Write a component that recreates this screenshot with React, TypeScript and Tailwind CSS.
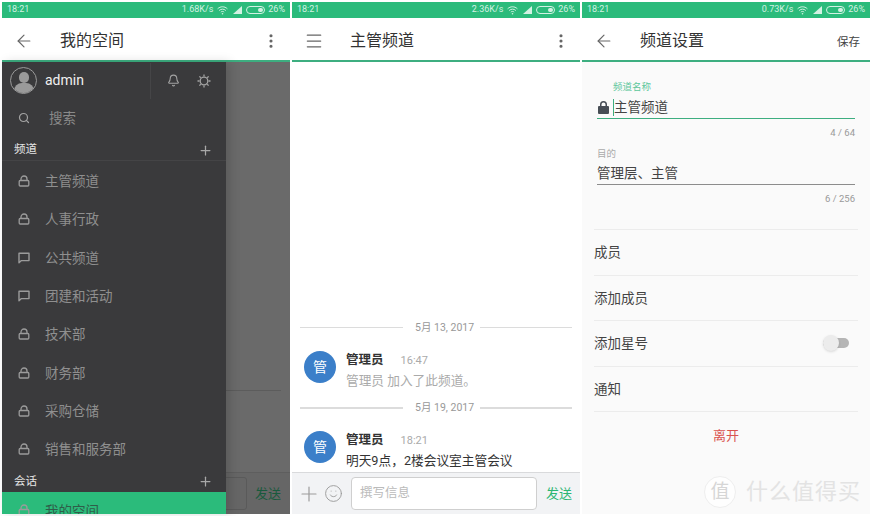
import { ArrowLeft, Bell, EllipsisVertical, Menu, Plus, Search, Smile } from 'lucide-react'

const font = 'font-["Roboto","Noto_Sans_CJK_SC",sans-serif]'

function StatusBar({ speed }: { speed: string }) {
  return (
    <div className="h-4 shrink-0 bg-[#2bbb7b] flex items-center pl-[5px] pr-[5px] text-[9px] text-[#d3f1e3]">
      <span>18:21</span>
      <span className="ml-auto">{speed}</span>
      <svg width="11" height="9" viewBox="0 0 11 9" className="ml-[4px]" fill="none" stroke="#d3f1e3" strokeWidth="1">
        <path d="M.6 2.8C3.5.1 7.5.1 10.4 2.8M2.2 4.5c2-1.800 4.600-1.800 6.600 0M3.800 6.100c1-.9 2.400-.9 3.400 0" />
        <circle cx="5.500" cy="7.700" r=".8" fill="#d3f1e3" stroke="none" />
      </svg>
      <svg width="10" height="8" viewBox="0 0 10 8" className="ml-[5px]" fill="#d3f1e3">
        <path d="M9 0v8H0Z" />
      </svg>
      <div className="ml-[3px] w-[19px] h-[8px] rounded-full border border-[#d3f1e3] flex justify-end p-[1px]">
        <div className="w-[5px] rounded-full bg-[#d3f1e3]" />
      </div>
      <span className="ml-[3px]">26%</span>
    </div>
  )
}

function Header({ icon, title, action }: { icon: React.ReactNode; title: string; action: React.ReactNode }) {
  return (
    <div className="h-[44px] shrink-0 bg-white border-b-2 border-[#3dae80] flex items-center pt-[3px] pl-[12px] pr-[10px]">
      <div className="w-[20px] flex justify-center text-[#666]">{icon}</div>
      <span className="ml-[26px] text-[16px] text-[#333]">{title}</span>
      <div className="ml-auto">{action}</div>
    </div>
  )
}

function Dots() {
  return <EllipsisVertical size={18} strokeWidth={2.2} className="text-[#666]" />
}

function LockIcon() {
  return (
    <svg width="12" height="12" viewBox="0 0 12 12" fill="none" stroke="#9b9b9b" strokeWidth="1.300">
      <rect x="1.200" y="5.500" width="9.600" height="5.500" rx="1" />
      <path d="M3 5.500V4a3 3 0 0 1 6 0v1.500" />
    </svg>
  )
}

function BubbleIcon() {
  return (
    <svg width="12" height="12" viewBox="0 0 12 12" fill="none" stroke="#9b9b9b" strokeWidth="1.400">
      <path d="M1 1.200h10V8.600H3.400L1 10.800Z" strokeLinejoin="round" />
    </svg>
  )
}

function Gear() {
  return (
    <svg width="14" height="14" viewBox="0 0 14 14" fill="none" stroke="#a3a3a3" strokeWidth="1.300">
      <circle cx="7" cy="7" r="3.800" />
      <path d="M7 .5v2M7 11.500v2M.5 7h2M11.500 7h2M2.400 2.400l1.400 1.400M10.200 10.200l1.400 1.400M2.400 11.600l1.400-1.400M10.200 3.800l1.400-1.400" />
    </svg>
  )
}

const channels: [string, boolean][] = [
  ['主管频道', true],
  ['人事行政', true],
  ['公共频道', false],
  ['团建和活动', false],
  ['技术部', true],
  ['财务部', true],
  ['采购仓储', true],
  ['销售和服务部', true],
]

function SectionTitle({ label }: { label: string }) {
  return (
    <div className="flex items-center justify-between pl-[12px] pr-[13px] text-[11.500px] text-[#e4e4e4]">
      <span>{label}</span>
      <Plus size={15} className="text-[#a8a8a8]" />
    </div>
  )
}

function Drawer() {
  return (
    <div className="absolute left-0 top-0 bottom-0 w-[224px] bg-[#3a3a3c] shadow-[4px_0_10px_rgba(0,0,0,0.15)] overflow-hidden flex flex-col">
      <div className="h-[37px] shrink-0 flex items-center pl-[8px]">
        <div className="w-[27px] h-[27px] rounded-full border border-[#9a9a9a] bg-[#3a3a3c] overflow-hidden flex flex-col items-center">
          <div className="mt-[4px] w-[10px] h-[12px] rounded-full bg-[#9a9a9a]" />
          <div className="w-[20px] h-[10px] rounded-t-[8px] bg-[#9a9a9a]" />
        </div>
        <span className="ml-[8px] text-[14px] text-[#f0f0f0]">admin</span>
        <div className="ml-auto h-[36px] w-px bg-[#454547]" />
        <Bell size={13} className="ml-[16px] text-[#a3a3a3]" />
        <div className="ml-[17px] mr-[15px]"><Gear /></div>
      </div>
      <div className="h-[38px] shrink-0 flex items-center pl-[16px] text-[13.500px] text-[#8a8a8a]">
        <Search size={12} strokeWidth={2.400} className="text-[#a3a3a3]" />
        <span className="ml-[19px]">搜索</span>
      </div>
      <div className="h-[24px] shrink-0 flex flex-col justify-center border-b border-[#444446] pt-[3px]">
        <SectionTitle label="频道" />
      </div>
      <div className="shrink-0 pt-[1px]">
        {channels.map(([name, locked]) => (
          <div key={name} className="h-[38.300px] flex items-center pl-[16px] text-[13.500px] text-[#8f8f8f]">
            <div className="w-[12px] flex justify-center">
              {locked ? <LockIcon /> : <BubbleIcon />}
            </div>
            <span className="ml-[15px]">{name}</span>
          </div>
        ))}
      </div>
      <div className="h-[24px] shrink-0 flex flex-col justify-center pt-[3px]">
        <SectionTitle label="会话" />
      </div>
      <div className="flex-1 bg-[#2bbb7b] flex items-start pl-[16px] pt-[9px] text-[13.500px] text-[#2f5d49]">
        <div className="mt-[3px]"><LockIcon /></div>
        <span className="ml-[15px]">我的空间</span>
      </div>
    </div>
  )
}

function ScreenOne() {
  return (
    <div className="w-[288px] flex flex-col">
      <StatusBar speed="1.68K/s" />
      <Header icon={<ArrowLeft size={20} strokeWidth={1.400} />} title="我的空间" action={<Dots />} />
      <div className="relative flex-1 bg-[#6a6a6a] flex flex-col justify-end">
        <div className="border-t border-[#5c5c5c] mb-[81px] ml-[224px] mr-[9px]" />
        <div className="h-[42px] border-t border-[#5e5e5e] bg-[#666] flex items-center justify-end pr-[9px] gap-[8px]">
          <div className="w-[24px] h-[33px] rounded-[3px] border border-[#5a5a5a]" />
          <span className="text-[13px] text-[#195a3d]">发送</span>
        </div>
        <Drawer />
      </div>
    </div>
  )
}

function DateLine({ date }: { date: string }) {
  return (
    <div className="flex items-center text-[10.500px] text-[#999]">
      <div className="w-[103px] h-[1.500px] bg-[#dcdcdc]" />
      <span className="ml-[12px] mr-[6px]">{date}</span>
      <div className="flex-1 h-[1.500px] bg-[#dcdcdc]" />
    </div>
  )
}

function Message({ time, body, muted, box }: { time: string; body: string; muted: boolean; box: string }) {
  return (
    <div className={`${box} flex pl-[4px]`}>
      <div className="w-[32px] h-[32px] rounded-full bg-[#3b7fc9] text-white text-[14px] flex items-center justify-center">管</div>
      <div className="ml-[10px]">
        <div className="flex items-center h-[18px] leading-none">
          <span className="text-[12.500px] font-bold text-[#333]">管理员</span>
          <span className="ml-[17px] text-[11px] text-[#aaa]">{time}</span>
        </div>
        <div className={`mt-[3px] text-[12.700px] leading-[18px] ${muted ? 'text-[#aaa]' : 'text-[#333]'}`}>{body}</div>
      </div>
    </div>
  )
}

function ScreenTwo() {
  return (
    <div className="w-[288px] flex flex-col">
      <StatusBar speed="2.36K/s" />
      <Header icon={<Menu size={20} strokeWidth={1.500} />} title="主管频道" action={<Dots />} />
      <div className="flex-1 bg-white flex flex-col justify-end overflow-hidden px-[8px]">
        <DateLine date="5月 13, 2017" />
        <Message time="16:47" body="管理员 加入了此频道。" muted box="h-[65px] pt-[16px]" />
        <DateLine date="5月 19, 2017" />
        <Message time="18:21" body={'明天9点\uFF0C2楼会议室主管会议'} muted={false} box="h-[56px] pt-[15px]" />
      </div>
      <div className="h-[42px] shrink-0 bg-[#f2f3f5] border-t border-[#d9dadc] flex items-center pl-[5px] pr-[8px]">
        <Plus size={24} strokeWidth={1.200} className="text-[#9c9c9c]" />
        <Smile size={19} strokeWidth={1.200} className="ml-[3px] text-[#9c9c9c]" />
        <div className="ml-[8px] w-[186px] h-[33px] bg-white rounded-[4px] border border-[#cfcfcf] flex items-center pl-[8px] text-[12.500px] text-[#bbb]">撰写信息</div>
        <span className="ml-auto text-[13px] text-[#2bb673]">发送</span>
      </div>
    </div>
  )
}

function SettingsRow({ label, children }: { label: string; children?: React.ReactNode }) {
  return (
    <div className="h-[45.500px] border-b border-[#ececec] flex items-center justify-between text-[13.500px] text-[#444]">
      <span>{label}</span>
      {children}
    </div>
  )
}

function ScreenThree() {
  return (
    <div className="relative w-[288px] flex flex-col">
      <StatusBar speed="0.73K/s" />
      <Header
        icon={<ArrowLeft size={20} strokeWidth={1.400} />}
        title="频道设置"
        action={<span className="text-[11.500px] text-[#444]">保存</span>}
      />
      <div className="flex-1 bg-[#fafafa] px-[15px] pt-[18px]">
        <div className="ml-[16px] text-[9.500px] leading-[14px] text-[#5cc79a]">频道名称</div>
        <div className="h-[25px] border-b-[1.500px] border-[#3dae80] flex items-center pt-[2px] text-[13.500px] text-[#444]">
          <svg width="11" height="13" viewBox="0 0 11 13" fill="#474d55" className="ml-[1px]">
            <path d="M2 5V3.500a3.500 3.500 0 0 1 7 0V5h1a1 1 0 0 1 1 1v6a1 1 0 0 1-1 1H1a1 1 0 0 1-1-1V6a1 1 0 0 1 1-1Zm1.500 0h4V3.500a2 2 0 0 0-4 0Z" />
          </svg>
          <span className="ml-[4px] h-[17px] w-px bg-[#3dae80]" />
          <span>主管频道</span>
        </div>
        <div className="text-right text-[9.500px] leading-[12px] mt-[8px] text-[#999]">4 / 64</div>
        <div className="text-[9.500px] leading-[12px] mt-[9px] text-[#aaa]">目的</div>
        <div className="h-[25px] border-b border-[#8c8c8c] flex items-center pt-[3px] text-[13.500px] text-[#444]">管理层、主管</div>
        <div className="text-right text-[9.500px] leading-[12px] mt-[8px] text-[#999]">6 / 256</div>
        <div className="mt-[24px] -ml-[3px] mr-[-3px] border-t border-[#ececec]">
          <SettingsRow label="成员" />
          <SettingsRow label="添加成员" />
          <SettingsRow label="添加星号">
            <div className="relative w-[26px] h-[10px] rounded-full bg-[#b5b5b5] mr-[9px]">
              <div className="absolute left-0 -top-[3px] w-[16px] h-[16px] rounded-full bg-[#ececec] shadow-sm" />
            </div>
          </SettingsRow>
          <SettingsRow label="通知" />
        </div>
        <div className="mt-[14px] text-center text-[13px] text-[#d9534f]">离开</div>
      </div>
      <div className="absolute right-[9px] bottom-[6px] flex items-center text-[#e3e3e3]">
        <div className="w-[32px] h-[32px] rounded-full bg-white/80 border border-[#eeeeee] flex items-center justify-center text-[19px] text-[#d6d6d6]">值</div>
        <span className="ml-[10px] text-[22px] tracking-[1px] leading-none">什么值得买</span>
      </div>
    </div>
  )
}

export default function App() {
  return (
    <div className={`w-[872px] h-[516px] bg-white flex gap-[2px] px-[2px] pt-[2px] pb-[2px] overflow-hidden ${font}`}>
      <ScreenOne />
      <ScreenTwo />
      <ScreenThree />
    </div>
  )
}
